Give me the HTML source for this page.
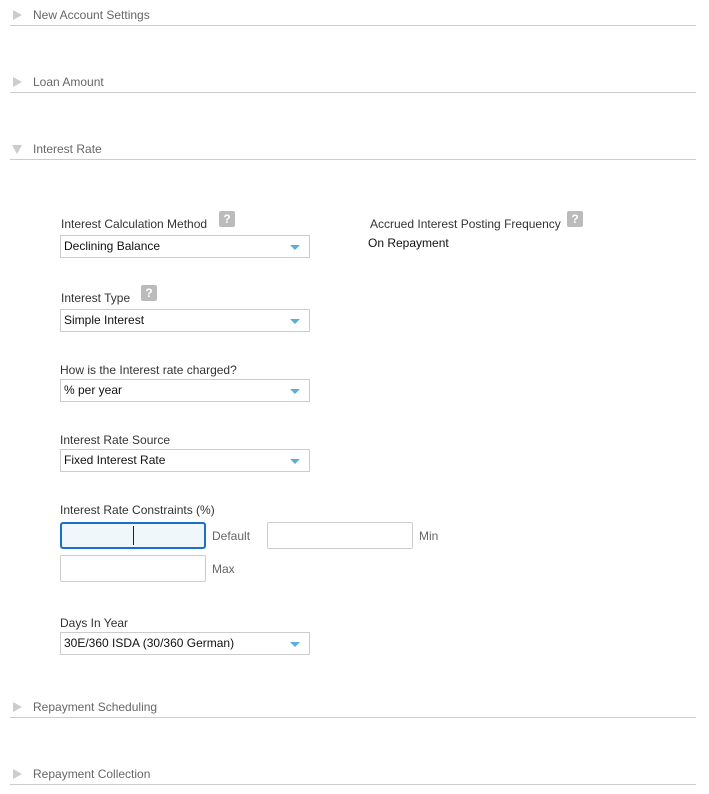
<!DOCTYPE html>
<html><head><style>
body{margin:0;width:709px;height:794px;background:#fff;font-family:"Liberation Sans",sans-serif;position:relative;overflow:hidden}
.a{position:absolute}
.h{position:absolute;left:33px;font-size:12px;color:#666;line-height:14px}
.line{position:absolute;left:10px;width:686px;height:1px;background:#ccc}
.tri{position:absolute;left:13px;width:0;height:0;border-top:5px solid transparent;border-bottom:5px solid transparent;border-left:9px solid #ccc}
.trd{position:absolute;left:12px;width:0;height:0;border-left:5px solid transparent;border-right:5px solid transparent;border-top:9px solid #ccc}
.lbl{position:absolute;font-size:12px;color:#333;line-height:14px}
.sel{position:absolute;left:60px;width:248px;height:21px;border:1px solid #ccc;font-size:12px;color:#111;line-height:21px;box-sizing:content-box}
.sel span{position:absolute;left:3px}
.sel i{position:absolute;right:9px;top:9px;border-left:5px solid transparent;border-right:5px solid transparent;border-top:5px solid #5aaedc}
.q{position:absolute;width:16px;height:16px;background:#bbb;border-radius:2px;color:#fff;font-size:12px;font-weight:bold;text-align:center;line-height:16px}
.in{position:absolute;width:144px;height:25px;border:1px solid #ccc;border-radius:2px}
.sm{position:absolute;font-size:12px;color:#666;line-height:14px}
</style></head><body>
<div class="tri" style="top:10px"></div><div class="h" style="top:8px">New Account Settings</div><div class="line" style="top:25px"></div>
<div class="tri" style="top:77px"></div><div class="h" style="top:75px">Loan Amount</div><div class="line" style="top:92px"></div>
<div class="trd" style="top:145px"></div><div class="h" style="top:142px">Interest Rate</div><div class="line" style="top:159px"></div>

<div class="lbl" style="left:61px;top:217px">Interest Calculation Method</div><div class="q" style="left:219px;top:211px">?</div>
<div class="sel" style="top:235px"><span>Declining Balance</span><i></i></div>
<div class="lbl" style="left:370px;top:217px">Accrued Interest Posting Frequency</div><div class="q" style="left:567px;top:211px">?</div>
<div class="lbl" style="left:368px;top:236px;color:#111">On Repayment</div>

<div class="lbl" style="left:61px;top:291px">Interest Type</div><div class="q" style="left:141px;top:285px">?</div>
<div class="sel" style="top:309px"><span>Simple Interest</span><i></i></div>

<div class="lbl" style="left:60px;top:363px">How is the Interest rate charged?</div>
<div class="sel" style="top:379px"><span>% per year</span><i></i></div>

<div class="lbl" style="left:60px;top:433px">Interest Rate Source</div>
<div class="sel" style="top:449px"><span>Fixed Interest Rate</span><i></i></div>

<div class="lbl" style="left:60px;top:503px">Interest Rate Constraints (%)</div>
<div class="in" style="left:60px;top:522px;border:2px solid #1a6fc9;width:142px;height:23px;background:#f0f7fa;border-radius:3px"></div>
<div class="a" style="left:133px;top:526px;width:1px;height:19px;background:#222"></div>
<div class="sm" style="left:212px;top:529px">Default</div>
<div class="in" style="left:267px;top:522px"></div>
<div class="sm" style="left:419px;top:529px">Min</div>
<div class="in" style="left:60px;top:555px"></div>
<div class="sm" style="left:212px;top:562px">Max</div>

<div class="lbl" style="left:60px;top:616px">Days In Year</div>
<div class="sel" style="top:632px"><span>30E/360 ISDA (30/360 German)</span><i></i></div>

<div class="tri" style="top:702px"></div><div class="h" style="top:700px">Repayment Scheduling</div><div class="line" style="top:717px"></div>
<div class="tri" style="top:769px"></div><div class="h" style="top:767px">Repayment Collection</div><div class="line" style="top:784px"></div>
</body></html>
